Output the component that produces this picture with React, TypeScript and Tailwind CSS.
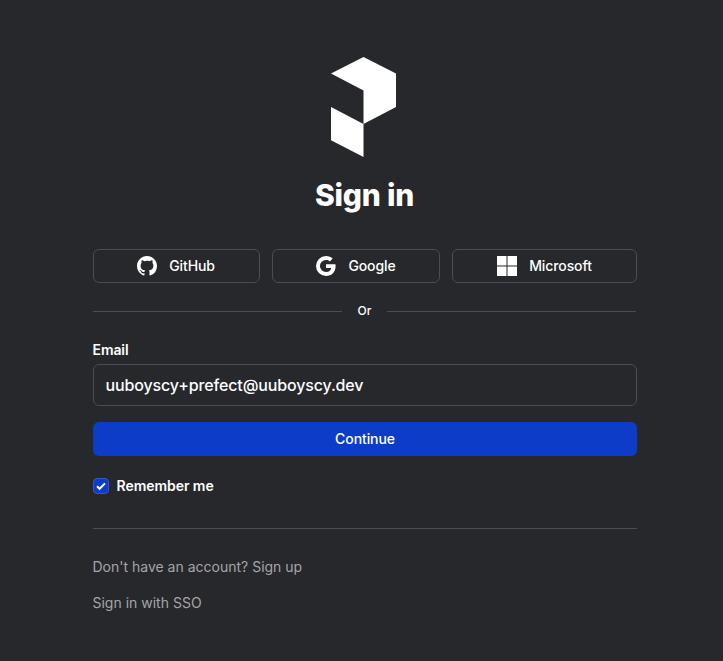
import type { ReactNode } from "react";

function Logo() {
  return (
    <svg className="h-[100px] w-[65px]" viewBox="0 0 65 100" fill="#fff" aria-label="Prefect">
      <path d="M32.5 0 65 16.6V50L32.5 67V33.4L0 16.6Z" />
      <path d="M0 50 32.5 67V100L0 83.3Z" />
    </svg>
  );
}

function GitHubIcon() {
  return (
    <svg className="size-5" viewBox="0 0 20 20" fill="currentColor">
      <path
        fillRule="evenodd"
        clipRule="evenodd"
        d="M10 0C4.477 0 0 4.484 0 10.017c0 4.425 2.865 8.18 6.839 9.504.5.092.682-.217.682-.483 0-.237-.008-.868-.013-1.703-2.782.605-3.369-1.343-3.369-1.343-.454-1.158-1.11-1.466-1.11-1.466-.908-.62.069-.608.069-.608 1.003.07 1.531 1.032 1.531 1.032.892 1.53 2.341 1.088 2.91.832.092-.647.35-1.088.636-1.338-2.22-.253-4.555-1.113-4.555-4.951 0-1.093.39-1.988 1.029-2.688-.103-.253-.446-1.272.098-2.65 0 0 .84-.27 2.75 1.026A9.564 9.564 0 0110 4.844c.85.004 1.705.115 2.504.337 1.909-1.296 2.747-1.027 2.747-1.027.546 1.379.203 2.398.1 2.651.64.7 1.028 1.595 1.028 2.688 0 3.848-2.339 4.695-4.566 4.942.359.31.678.921.678 1.856 0 1.338-.012 2.419-.012 2.747 0 .268.18.58.688.482A10.019 10.019 0 0020 10.017C20 4.484 15.522 0 10 0z"
      />
    </svg>
  );
}

function GoogleIcon() {
  return (
    <svg className="size-5" viewBox="0 0 20 20" fill="currentColor">
      <path d="M10 8.2h9.4c.13.65.2 1.33.2 2.02C19.6 15.95 15.76 20 10 20A10 10 0 1 1 10 0c2.7 0 4.96.99 6.69 2.61l-2.82 2.82C12.84 4.44 11.52 3.94 10 3.94a6.06 6.06 0 1 0 0 12.12c3.1 0 4.84-1.76 5.3-4.06H10z" />
    </svg>
  );
}

function MicrosoftIcon() {
  return (
    <svg className="size-5" viewBox="0 0 20 20" fill="currentColor">
      <path d="M0 0h9.5v9.5H0zM10.5 0H20v9.5h-9.5zM0 10.5h9.5V20H0zM10.5 10.5H20V20h-9.5z" />
    </svg>
  );
}

function ProviderButton({ icon, label, width }: { icon: ReactNode; label: string; width: string }) {
  return (
    <button
      className={`${width} flex h-[34px] items-center justify-center gap-3 rounded-md border border-[#4b4c54] text-sm font-medium`}
    >
      {icon}
      <span className="tracking-[-0.1px]">{label}</span>
    </button>
  );
}

export default function App() {
  return (
    <main className="h-[661px] bg-[#27282c] pl-[93px] font-['Inter',sans-serif] text-white">
      <div className="flex w-[544px] flex-col pt-[57px]">
        <div className="flex justify-center pr-[3px]">
          <Logo />
        </div>
        <h1 className="mt-5 pr-px text-center text-[30px] leading-9 font-extrabold tracking-[-0.2px]">Sign in</h1>

        <div className="mt-9 flex gap-3">
          <ProviderButton icon={<GitHubIcon />} label="GitHub" width="w-[167px] pr-px" />
          <ProviderButton icon={<GoogleIcon />} label="Google" width="w-[168px]" />
          <ProviderButton icon={<MicrosoftIcon />} label="Microsoft" width="w-[185px]" />
        </div>

        <div className="mt-5 flex h-4 items-center gap-4 pr-px text-xs font-medium">
          <div className="mt-px h-px flex-1 bg-[#4b4c54]" />
          <span>Or</span>
          <div className="mt-px h-px flex-1 bg-[#4b4c54]" />
        </div>

        <label className="mt-[21px] -ml-[0.5px] text-sm leading-5 font-semibold tracking-[-0.1px]">Email</label>
        <div className="mt-1 flex h-[42px] items-center rounded-md border border-[#4b4c54] px-[11.5px] text-base font-medium tracking-[-0.14px]">
          uuboyscy+prefect@uuboyscy.dev
        </div>

        <button className="mt-4 h-[34px] rounded-md bg-[#0d3dc8] text-sm font-medium tracking-[-0.08px]">Continue</button>

        <label className="mt-5 flex h-5 items-center gap-[7.5px] text-sm font-semibold tracking-[-0.05px]">
          <span className="flex size-4 items-center justify-center rounded border border-[#3556c4] bg-[#0d3dc8]">
            <svg className="size-3.5" viewBox="0 0 14 14" fill="none" stroke="#fff" strokeWidth="2">
              <path d="M3 7.2 5.6 9.8 11 4.4" />
            </svg>
          </span>
          Remember me
        </label>

        <hr className="mt-8 border-[#4b4c54]" />

        <div className="mt-7 -ml-[0.5px] flex flex-col gap-4 text-sm text-[#a5a5a7]">
          <p>Don't have an account? Sign up</p>
          <p>Sign in with SSO</p>
        </div>
      </div>
    </main>
  );
}
